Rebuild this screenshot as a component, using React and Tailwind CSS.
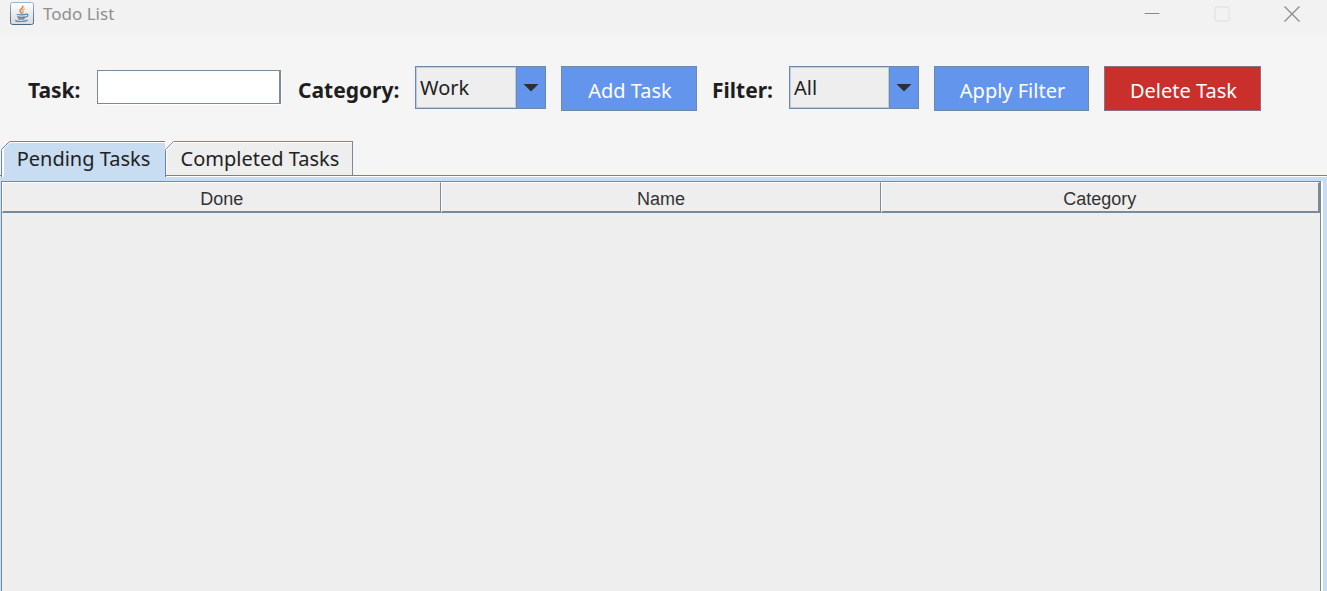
import { useState } from "react";

function JavaIcon() {
  return (
    <svg width="26" height="26" viewBox="0 0 26 26" aria-hidden="true" className="shrink-0">
      <defs>
        <linearGradient id="frame" x1="0" y1="0" x2="0" y2="1">
          <stop offset="0" stopColor="#ffffff" />
          <stop offset="1" stopColor="#d3dae2" />
        </linearGradient>
        <linearGradient id="frameEdge" x1="0" y1="0" x2="0" y2="1">
          <stop offset="0" stopColor="#9db3c5" />
          <stop offset="1" stopColor="#4f6475" />
        </linearGradient>
      </defs>
      <rect x="1.5" y="1.5" width="23" height="22" rx="2" fill="url(#frame)" stroke="url(#frameEdge)" />
      <g fill="none" strokeLinecap="round">
        <path d="M13.8 5.2c.8 2.2-3.600 2.800-2.800 5 .3.800 1 1.300 1.300 2" stroke="#e8823c" strokeWidth="1.600" />
        <path d="M15.500 8c-2.200.8-2.300 1.700-1.500 2.600.5.600.2 1.200-.4 1.700" stroke="#ec9a5c" strokeWidth="1.200" />
        <path d="M8.200 13.500c1.500.5 7 .5 8.500-.1" stroke="#5c82a3" strokeWidth="1.200" />
        <path d="M8.800 15.800c1.500.7 5.500.7 7.200 0M9.600 17.700c1.300.5 4 .5 5.600 0" stroke="#5c82a3" strokeWidth="1.300" />
        <path d="M17.200 13.200c2.200-.4 2.300 2-.4 3" stroke="#5c82a3" strokeWidth="1.200" />
        <path d="M7 19.300c-1.700 1.300 8.500 1.900 11.300 0" stroke="#5c82a3" strokeWidth="1.200" />
      </g>
    </svg>
  );
}

function TitleBar() {
  const control = "flex h-7 w-[70px] items-center justify-center";
  return (
    <header className="flex h-9 items-start justify-between bg-[#f2f2f2] pl-[9px]">
      <div className="flex h-7 items-center gap-2">
        <JavaIcon />
        <h1 className="font-['Noto_Sans',sans-serif] text-[17px] leading-7 text-[#8f8f8f]">Todo List</h1>
      </div>
      <div className="flex">
        <button type="button" aria-label="Minimize" className={control}>
          <svg width="16" height="16" viewBox="0 0 16 16" aria-hidden="true">
            <path d="M0.500 7.500h15" stroke="#8c8c8c" />
          </svg>
        </button>
        <button type="button" aria-label="Maximize" disabled className={control}>
          <svg width="16" height="16" viewBox="0 0 16 16" aria-hidden="true">
            <rect x="1" y="1" width="14" height="14" rx="1" fill="none" stroke="#dedede" />
          </svg>
        </button>
        <button type="button" aria-label="Close" className={control}>
          <svg width="16" height="16" viewBox="0 0 16 16" aria-hidden="true">
            <path d="M0.500 0.500l15 15M15.500 0.500l-15 15" stroke="#8c8c8c" strokeWidth="1.300" />
          </svg>
        </button>
      </div>
    </header>
  );
}

function Combo({ id, options, className }) {
  return (
    <div className={"relative flex h-[43px] shrink-0 border border-[#7088a5] bg-[#6495ed] " + className}>
      <select
        id={id}
        className="w-full appearance-none bg-transparent bg-[linear-gradient(#eeeeee,#eeeeee)] bg-[length:calc(100%_-_29px)_100%] bg-no-repeat pl-1 text-[20px] text-[#222222] outline-none"
      >
        {options.map((o) => (
          <option key={o}>{o}</option>
        ))}
      </select>
      <span className="pointer-events-none absolute inset-y-0 left-0 right-[29px] border border-[#b8cfe5]" />
      <span className="pointer-events-none absolute inset-y-0 right-0 flex w-[29px] items-center justify-center border-l border-[#7088a5]">
        <svg width="16" height="8" viewBox="0 0 16 8" aria-hidden="true">
          <path d="M0.500 0h15L8 7.500z" fill="#2b3035" />
        </svg>
      </span>
    </div>
  );
}

function Toolbar() {
  const label = "shrink-0 pt-[2px] text-[21px] leading-[44px] font-bold whitespace-nowrap text-[#1e1e1e]";
  const button = "h-[45px] shrink-0 border pt-1 pl-[2px] text-[20px] whitespace-nowrap text-white";
  return (
    <form className="flex items-start gap-[15px] pt-[30px] pb-[29px] pl-7" onSubmit={(e) => e.preventDefault()}>
      <label htmlFor="task" className={label + " w-[54px]"}>Task:</label>
      <input
        id="task"
        type="text"
        className="mt-1 h-[34px] w-[184px] border border-r-2 border-[#7a8a99] bg-white px-1 text-[20px] shadow-[1px_1px_0_#ffffff] outline-none"
      />
      <label htmlFor="category" className={label + " w-[104px] pl-[2px]"}>Category:</label>
      <Combo id="category" options={["Work", "Personal", "Other"]} className="w-[131px]" />
      <button type="submit" className={button + " w-[136px] border-[#7088a5] bg-[#6495ed]"}>Add Task</button>
      <label htmlFor="filter" className={label + " w-[62px]"}>Filter:</label>
      <Combo id="filter" options={["All", "Work", "Personal", "Other"]} className="w-[130px]" />
      <button type="button" className={button + " w-[155px] border-[#7088a5] bg-[#6495ed]"}>Apply Filter</button>
      <button type="button" className={button + " w-[157px] border-[#8a7380] bg-[#c9302c]"}>Delete Task</button>
    </form>
  );
}

function Tabs({ active, onChange }) {
  const base = "relative border-t border-r text-[20px] leading-8 whitespace-nowrap text-[#222222]";
  const look = (i) =>
    active === i
      ? " -mb-[2px] h-[36px] border-[#6382bf] bg-[#c8ddf2] pb-[2px] shadow-[inset_2px_1px_0_#ffffff]"
      : " h-[34px] border-[#7a8a99] bg-[#eeeeee] shadow-[inset_1px_1px_0_#ffffff]";
  return (
    <div role="tablist" className="flex items-start border-b border-[#6382bf] pl-px">
      {["Pending Tasks", "Completed Tasks"].map((name, i) => (
        <button
          key={name}
          type="button"
          role="tab"
          aria-selected={active === i}
          onClick={() => onChange(i)}
          className={base + look(i) + (i === 0 ? " w-[165px] border-l" : " w-[187px] pl-[2px]")}
        >
          <svg width="10" height="10" viewBox="0 0 10 10" aria-hidden="true" className="absolute -top-px -left-px">
            <path d="M0 0H9L0 9Z" fill="#f5f5f5" />
            <path d="M1 9.500L9.500 1" stroke="#ffffff" />
            <path d="M0.500 8.500L8.500 0.500" stroke={active === i ? "#6382bf" : "#7a8a99"} />
          </svg>
          {name}
        </button>
      ))}
    </div>
  );
}

function TaskTable() {
  return (
    <div className="flex flex-1 flex-col border-t border-white bg-[#c8ddf2] pt-1 pr-[6px] pl-px">
      <div className="flex-1 border-t border-r border-l border-[#7a8a99] bg-[#eeeeee] shadow-[2px_0_0_#ffffff]">
        <table className="w-full table-fixed border-separate border-spacing-0 font-['Liberation_Sans',Arial,sans-serif] text-[18px] leading-6 text-[#333333]">
          <thead>
            <tr>
              {["Done", "Name", "Category"].map((h) => (
                <th
                  key={h}
                  scope="col"
                  className="border-t border-r border-b-2 border-l border-t-white border-r-[#7a8a99] border-b-[#7a8a99] border-l-white pt-1 pb-0 font-normal last:border-r-2"
                >
                  {h}
                </th>
              ))}
            </tr>
          </thead>
          <tbody />
        </table>
      </div>
    </div>
  );
}

export default function App() {
  const [tab, setTab] = useState(0);
  return (
    <div className="flex min-h-screen flex-col bg-[#f5f5f5] font-['Noto_Sans',sans-serif]">
      <TitleBar />
      <Toolbar />
      <Tabs active={tab} onChange={setTab} />
      <TaskTable />
    </div>
  );
}
